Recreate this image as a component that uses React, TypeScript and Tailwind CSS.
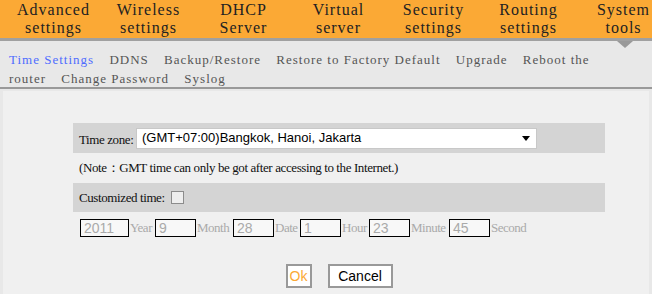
import { useState } from "react";

// Menu principal y submenu
const menu = [
  ["Advanced", "settings"],
  ["Wireless", "settings"],
  ["DHCP", "Server"],
  ["Virtual", "server"],
  ["Security", "settings"],
  ["Routing", "settings"],
  ["System", "tools"],
];

const submenu = [
  "Time Settings",
  "DDNS",
  "Backup/Restore",
  "Restore to Factory Default",
  "Upgrade",
  "Reboot the router",
  "Change Password",
  "Syslog",
];

const serif = { fontFamily: '"Liberation Serif", "Times New Roman", serif' };
const sans = { fontFamily: '"Liberation Sans", Arial, sans-serif' };

// Campos de fecha con el ancho de la caja y de su etiqueta
const campos = [
  { v: "2011", l: "Year", b: "w-[49px]", w: "w-[26px]" },
  { v: "9", l: "Month", b: "w-[41px]", w: "w-[37px]" },
  { v: "28", l: "Date", b: "w-[41px]", w: "w-[26px]" },
  { v: "1", l: "Hour", b: "w-[41px]", w: "w-[28px]" },
  { v: "23", l: "Minute", b: "w-[41px]", w: "w-[39px]" },
  { v: "45", l: "Second", b: "w-[41px]", w: "w-[45px]" },
];

const App = () => {
  const [custom, setCustom] = useState(false);

  return (
    <div className="w-[652px] h-[294px] overflow-hidden bg-[#e8e8e8]" style={serif}>
      {/* Barra naranja */}
      <div className="h-[38px] bg-[#fba935] flex pl-[6px] overflow-hidden">
        {menu.map(([a, b]) => (
          <div key={a} className="w-[95px] shrink-0 text-center text-[16px] leading-[18px] tracking-[1px] text-[#222] pt-[1px]">
            {a}
            <br />
            {b}
          </div>
        ))}
      </div>
      <div className="relative h-[3px] bg-[#a0a0a0]">
        <div className="absolute left-[617px] top-[3px] w-0 h-0 border-l-[8px] border-r-[8px] border-t-[7px] border-l-transparent border-r-transparent border-t-[#999]" />
      </div>

      {/* Submenu */}
      <div className="h-[46px] pl-[9px] pr-[40px] pt-[9px] text-[13px] leading-[19px] tracking-[1px] text-[#555]">
        {submenu.map((s, i) => (
          <span key={s}>
            <span className={i === 0 ? "text-[#4f6dff] mr-[11px]" : "mr-[11px]"}>{s}</span>{" "}
          </span>
        ))}
      </div>
      <div className="h-[2px] bg-[#999]" />

      {/* Contenido */}
      <div className="h-[205px] mx-[3px] mt-[2px] bg-[#f0f0f0] pl-[70px] pr-[44px] pt-[32px]">
        <div className="h-[30px] bg-[#d4d4d4] flex items-center pl-[6px] text-[13px] tracking-[-0.4px] text-[#111]">
          <span className="w-[57px] shrink-0 mt-[4px]">Time zone:</span>
          <div className="w-[401px] h-[21px] bg-white border border-[#c8c8c8] flex items-center justify-between pl-[5px] pr-[6px] text-[13px] tracking-normal text-black" style={sans}>
            <span>(GMT+07:00)Bangkok, Hanoi, Jakarta</span>
            <span className="w-0 h-0 border-l-[4px] border-r-[4px] border-t-[5px] border-l-transparent border-r-transparent border-t-black" />
          </div>
        </div>
        <div className="h-[30px] flex items-center pl-[6px] text-[13px] tracking-[-0.4px] text-[#111]">
          (Note：GMT time can only be got after accessing to the Internet.)
        </div>
        <div className="h-[29px] bg-[#d4d4d4] flex items-center pl-[6px] text-[13px] tracking-[-0.4px] text-[#111]">
          <span className="mr-[6px]">Customized time:</span>
          <input
            type="checkbox"
            checked={custom}
            onChange={() => setCustom(!custom)}
            className="appearance-none w-[13px] h-[13px] border border-[#8c8c8c] bg-[#eee] m-0"
          />
        </div>
        <div className="flex items-center pl-[7px] mt-[6px] text-[13px] tracking-[-0.5px] text-[#aaa]">
          {campos.map((c) => (
            <span key={c.l} className="flex items-center">
              <span className={`${c.b} h-[18px] border border-black bg-[#f8f8f8] pl-[3px] text-[14px] leading-[16px] tracking-normal text-[#aaa]`} style={sans}>
                {c.v}
              </span>
              <span className={`${c.w} pl-[1px] whitespace-nowrap`}>{c.l}</span>
            </span>
          ))}
        </div>
        <div className="flex justify-center gap-[16px] mt-[26px]" style={sans}>
          <button className="w-[26px] h-[24px] bg-white border-2 border-[#999] text-[14px] text-[#fba935]">Ok</button>
          <button className="w-[65px] h-[24px] bg-white border-2 border-[#999] text-[14px] text-black">Cancel</button>
        </div>
      </div>
    </div>
  );
};

export default App;
